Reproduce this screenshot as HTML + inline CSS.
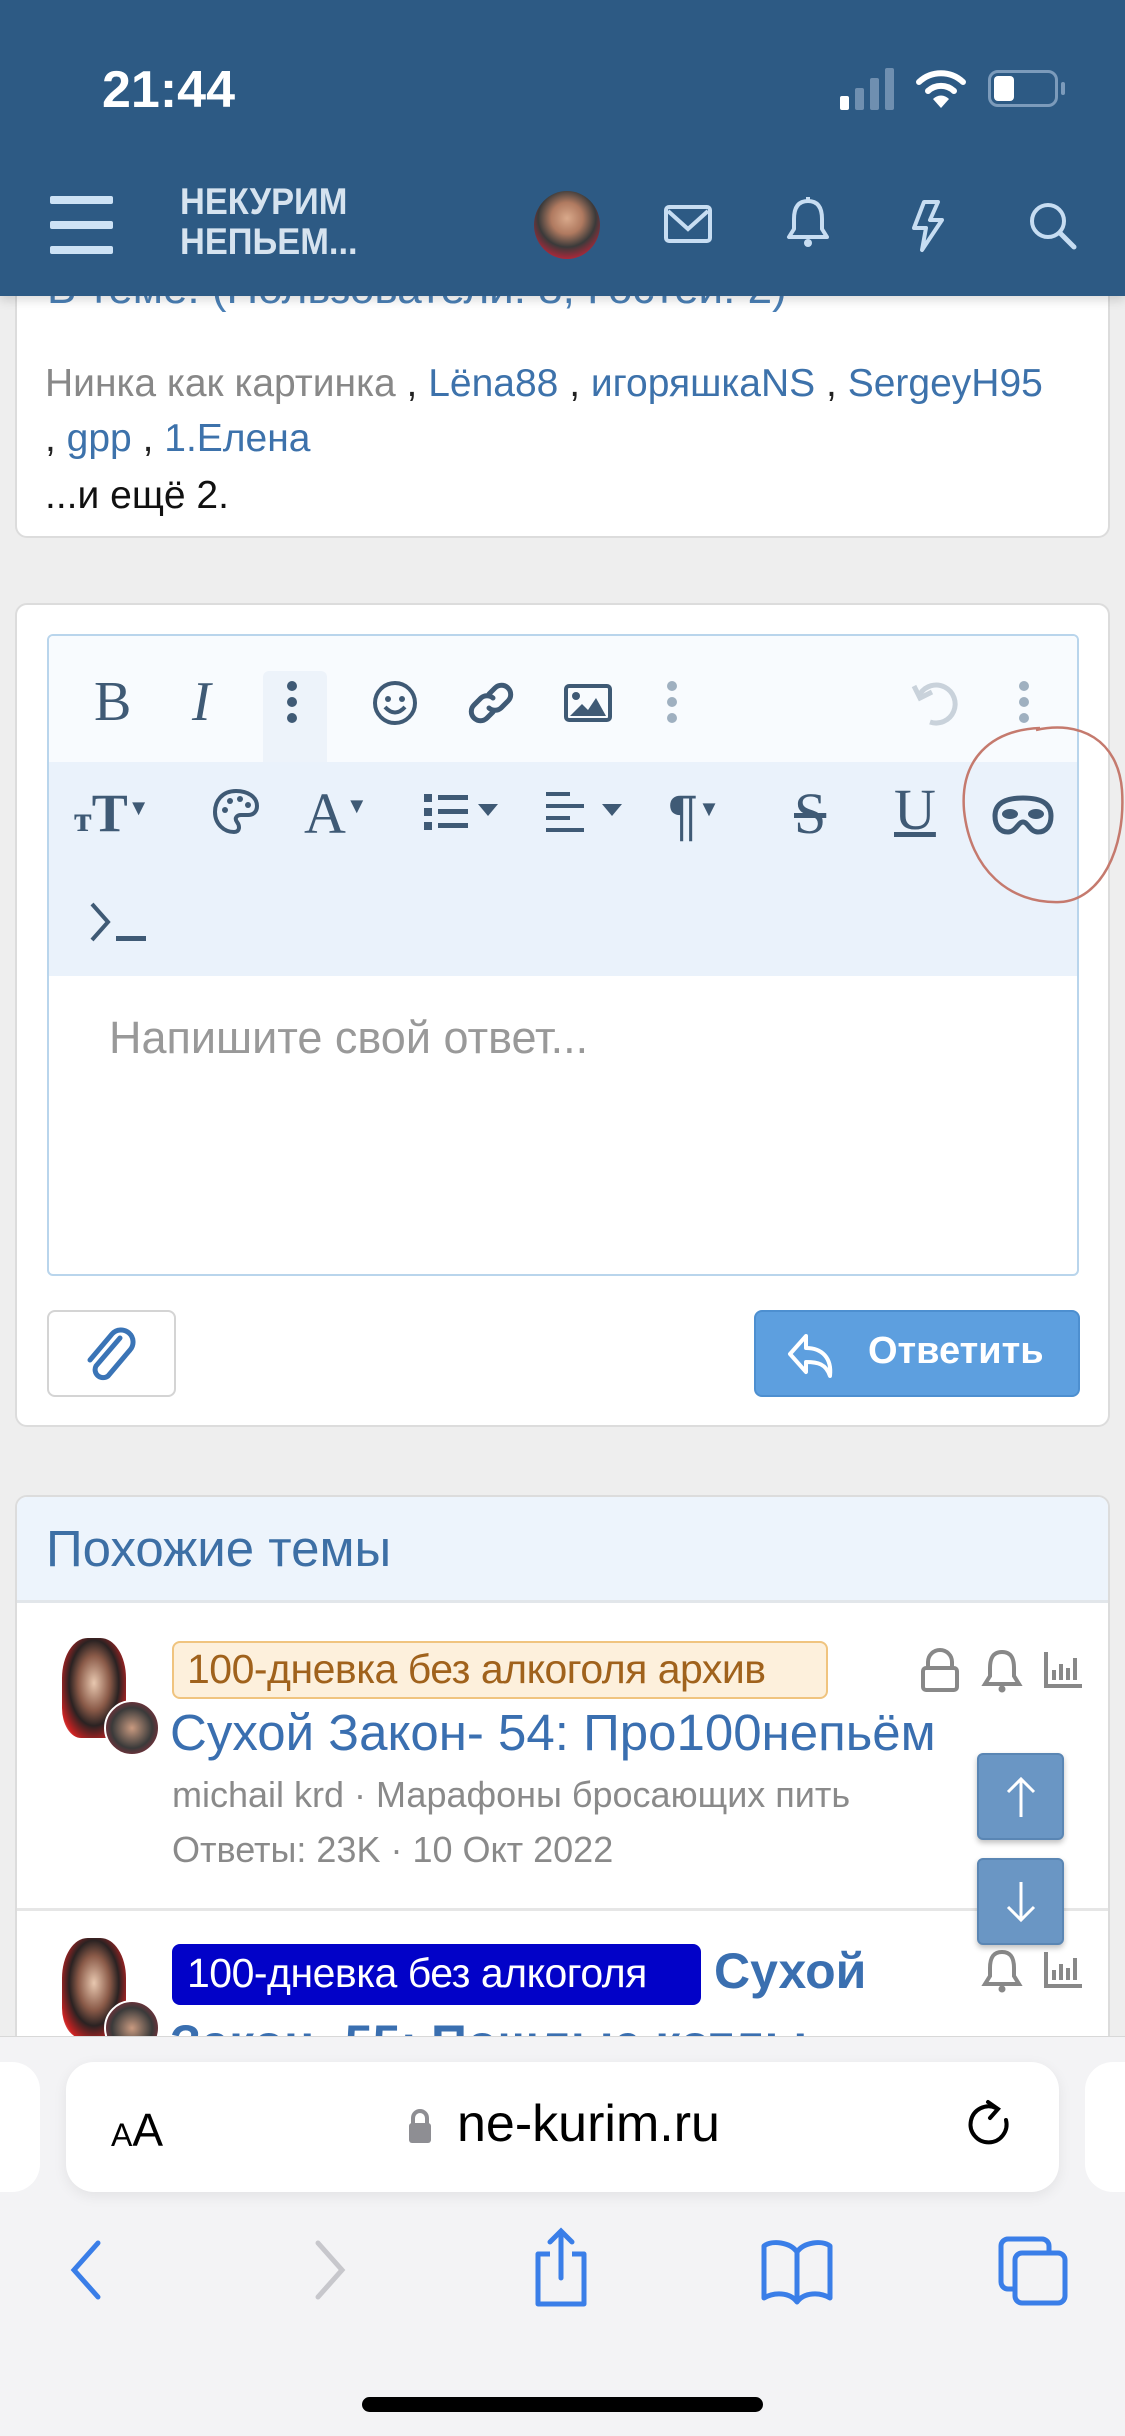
<!DOCTYPE html>
<html><head><meta charset="utf-8"><style>
*{margin:0;padding:0;box-sizing:border-box}
body{width:1125px;height:2436px;background:#eeeeee;position:relative;overflow:hidden;font-family:"Liberation Sans","DejaVu Sans",sans-serif}
.abs{position:absolute}
.card{position:absolute;left:15px;width:1095px;background:#fff;border:2px solid #dcdcdc;border-radius:12px}
.t{position:absolute;white-space:nowrap}
svg{position:absolute;overflow:visible}
</style></head><body>

<!-- card 1 -->
<div class="card" style="top:230px;height:308px"></div>
<div class="t" style="left:47px;top:264px;font-size:44px;color:#4a7fb5">В теме: (Пользователи: 8, Гостей: 2)</div>
<div class="t" style="left:45px;top:362px;font-size:39px;color:#888">Нинка как картинка <span style="color:#222">,</span> <span style="color:#3d72ab">Lëna88</span> <span style="color:#222">,</span> <span style="color:#3d72ab">игоряшкаNS</span> <span style="color:#222">,</span> <span style="color:#3d72ab">SergeyH95</span></div>
<div class="t" style="left:45px;top:417px;font-size:39px;color:#222">, <span style="color:#3d72ab">gpp</span> , <span style="color:#3d72ab">1.Елена</span></div>
<div class="t" style="left:45px;top:474px;font-size:39px;color:#111">...и ещё 2.</div>

<!-- header -->
<div class="abs" style="left:0;top:0;width:1125px;height:296px;background:#2d5a84;box-shadow:0 4px 10px rgba(0,0,0,.15)"></div>
<div class="t" style="left:102px;top:60px;font-size:52px;font-weight:bold;color:#fff">21:44</div>
<svg style="left:838px;top:68px" width="60" height="42"><rect x="2" y="28" width="9" height="14" rx="2" fill="#fff"/><rect x="17" y="20" width="9" height="22" rx="2" fill="#6f8fb0"/><rect x="32" y="10" width="9" height="32" rx="2" fill="#6f8fb0"/><rect x="47" y="0" width="9" height="42" rx="2" fill="#6f8fb0"/></svg>
<svg style="left:916px;top:68px" width="50" height="40" viewBox="0 0 50 40"><path d="M3 14 A32 32 0 0 1 47 14" stroke="#fff" stroke-width="6" fill="none" stroke-linecap="round"/><path d="M12 23 A19 19 0 0 1 38 23" stroke="#fff" stroke-width="6" fill="none" stroke-linecap="round"/><path d="M25 40 L17 31 A11 11 0 0 1 33 31 Z" fill="#fff"/></svg>
<div class="abs" style="left:988px;top:70px;width:70px;height:37px;border:3px solid #7c9bbb;border-radius:10px"></div>
<div class="abs" style="left:994px;top:76px;width:20px;height:25px;background:#fff;border-radius:4px"></div>
<div class="abs" style="left:1061px;top:82px;width:4px;height:13px;background:#7c9bbb;border-radius:2px"></div>

<div class="abs" style="left:50px;top:196px;width:63px;height:8px;background:#cde2f5;border-radius:2px"></div>
<div class="abs" style="left:50px;top:221px;width:63px;height:8px;background:#cde2f5;border-radius:2px"></div>
<div class="abs" style="left:50px;top:246px;width:63px;height:8px;background:#cde2f5;border-radius:2px"></div>
<div class="t" style="left:180px;top:182px;font-size:37px;font-weight:bold;color:#d6e3ef;line-height:40px;transform:scaleX(0.93);transform-origin:left">НЕКУРИМ<br>НЕПЬЕМ...</div>
<div class="abs" style="left:534px;top:191px;width:66px;height:68px;border-radius:50%;background:radial-gradient(circle at 50% 40%,#d9a98b 0,#b07a60 30%,#3a3a3a 55%,#b8263a 80%,#8a1a2a 100%)"></div>
<svg style="left:664px;top:205px" width="50" height="40"><rect x="2" y="2" width="44" height="34" rx="3" stroke="#c7ddf2" stroke-width="4" fill="none"/><path d="M4 6 L24 24 L44 6" stroke="#c7ddf2" stroke-width="4" fill="none"/></svg>
<svg style="left:786px;top:197px" width="44" height="52"><path d="M22 4 C10 4 8 14 8 22 L8 32 L3 40 L41 40 L36 32 L36 22 C36 14 34 4 22 4 Z" stroke="#c7ddf2" stroke-width="4" fill="none" stroke-linejoin="round"/><circle cx="22" cy="46" r="4" fill="#c7ddf2"/><rect x="20" y="0" width="4" height="6" fill="#c7ddf2"/></svg>
<svg style="left:908px;top:200px" width="40" height="52"><path d="M16 2 L30 2 L22 20 L34 20 L14 50 L18 28 L6 28 Z" stroke="#c7ddf2" stroke-width="4" fill="none" stroke-linejoin="round"/></svg>
<svg style="left:1028px;top:201px" width="50" height="50"><circle cx="20" cy="20" r="16" stroke="#c7ddf2" stroke-width="4" fill="none"/><path d="M32 32 L46 46" stroke="#c7ddf2" stroke-width="5" stroke-linecap="round"/></svg>

<!-- card 2 editor -->
<div class="card" style="top:603px;height:824px"></div>
<div class="abs" style="left:47px;top:634px;width:1032px;height:642px;border:2px solid #b9d5ec;border-radius:6px;overflow:hidden;background:#fff">
  <div class="abs" style="left:0;top:0;width:1032px;height:126px;background:#f8fbfe"></div>
  <div class="abs" style="left:214px;top:35px;width:64px;height:92px;background:#edf3fa;border-radius:6px 6px 0 0"></div>
  <div class="abs" style="left:0;top:126px;width:1032px;height:214px;background:#eaf2fb"></div>
</div>
<div class="t" style="left:94px;top:670px;font-size:56px;font-family:'Liberation Serif',serif;color:#3f5a75">B</div>
<div class="t" style="left:192px;top:670px;font-size:56px;font-family:'Liberation Serif',serif;font-style:italic;color:#3f5a75">I</div>
<svg style="left:286px;top:680px" width="12" height="46"><circle cx="6" cy="6" r="5" fill="#3f5a75"/><circle cx="6" cy="22" r="5" fill="#3f5a75"/><circle cx="6" cy="38" r="5" fill="#3f5a75"/></svg>
<svg style="left:372px;top:680px" width="46" height="46"><circle cx="23" cy="23" r="20" stroke="#3f5a75" stroke-width="4" fill="none"/><circle cx="16" cy="19" r="3" fill="#3f5a75"/><circle cx="30" cy="19" r="3" fill="#3f5a75"/><path d="M13 27 Q23 38 33 27" stroke="#3f5a75" stroke-width="4" fill="none"/></svg>
<svg style="left:467px;top:680px" width="48" height="46"><path d="M22 14 L28 8 A9 9 0 0 1 41 21 L34 28 A9 9 0 0 1 22 28" stroke="#3f5a75" stroke-width="5" fill="none" stroke-linecap="round"/><path d="M26 32 L20 38 A9 9 0 0 1 7 25 L14 18 A9 9 0 0 1 26 18" stroke="#3f5a75" stroke-width="5" fill="none" stroke-linecap="round"/></svg>
<svg style="left:564px;top:684px" width="48" height="38"><rect x="2" y="2" width="44" height="34" rx="3" stroke="#3f5a75" stroke-width="4" fill="none"/><circle cx="12" cy="12" r="4" fill="#3f5a75"/><path d="M6 32 L18 20 L24 26 L32 14 L42 32 Z" fill="#3f5a75"/></svg>
<svg style="left:666px;top:680px" width="12" height="46"><circle cx="6" cy="6" r="5" fill="#9fb0c0"/><circle cx="6" cy="22" r="5" fill="#9fb0c0"/><circle cx="6" cy="38" r="5" fill="#9fb0c0"/></svg>
<svg style="left:912px;top:680px" width="50" height="46"><path d="M8 14 A19 19 0 1 1 18 42" stroke="#c9d2db" stroke-width="5" fill="none"/><path d="M2 6 L8 18 L20 12" stroke="#c9d2db" stroke-width="5" fill="none"/></svg>
<svg style="left:1018px;top:680px" width="12" height="46"><circle cx="6" cy="6" r="5" fill="#9fb0c0"/><circle cx="6" cy="22" r="5" fill="#9fb0c0"/><circle cx="6" cy="38" r="5" fill="#9fb0c0"/></svg>

<div class="t" style="left:74px;top:782px;font-size:54px;font-family:'Liberation Serif',serif;font-weight:bold;color:#3f5a75"><span style="font-size:36px">т</span>T<span style="font-size:22px;vertical-align:16px">▼</span></div>
<svg style="left:212px;top:788px" width="48" height="48"><path d="M24 3 C10 3 3 13 3 24 C3 36 12 44 22 44 C28 44 28 38 25 34 C22 30 25 27 29 27 L36 27 C42 27 45 23 45 18 C45 9 36 3 24 3 Z" stroke="#3f5a75" stroke-width="4" fill="none"/><circle cx="13" cy="22" r="3" fill="#3f5a75"/><circle cx="18" cy="13" r="3" fill="#3f5a75"/><circle cx="28" cy="11" r="3" fill="#3f5a75"/><circle cx="36" cy="17" r="3" fill="#3f5a75"/></svg>
<div class="t" style="left:304px;top:780px;font-size:58px;font-family:'Liberation Serif',serif;color:#3f5a75">A<span style="font-size:22px;vertical-align:20px">▼</span></div>
<svg style="left:422px;top:792px" width="82" height="40"><rect x="2" y="2" width="8" height="8" fill="#3f5a75"/><rect x="2" y="16" width="8" height="8" fill="#3f5a75"/><rect x="2" y="30" width="8" height="8" fill="#3f5a75"/><rect x="16" y="3" width="30" height="5" fill="#3f5a75"/><rect x="16" y="17" width="30" height="5" fill="#3f5a75"/><rect x="16" y="31" width="30" height="5" fill="#3f5a75"/><path d="M56 12 L76 12 L66 24 Z" fill="#3f5a75"/></svg>
<svg style="left:546px;top:790px" width="80" height="44"><rect x="0" y="2" width="24" height="4" fill="#3f5a75"/><rect x="0" y="14" width="38" height="4" fill="#3f5a75"/><rect x="0" y="26" width="24" height="4" fill="#3f5a75"/><rect x="0" y="38" width="38" height="4" fill="#3f5a75"/><path d="M56 14 L76 14 L66 26 Z" fill="#3f5a75"/></svg>
<div class="t" style="left:668px;top:782px;font-size:56px;color:#3f5a75">¶<span style="font-size:22px;vertical-align:18px">▼</span></div>
<div class="t" style="left:794px;top:780px;font-size:58px;color:#3f5a75;text-decoration:line-through;font-family:'Liberation Serif',serif">S</div>
<div class="t" style="left:894px;top:776px;font-size:58px;color:#3f5a75;text-decoration:underline;font-family:'Liberation Serif',serif">U</div>
<svg style="left:992px;top:794px" width="62" height="42"><path d="M31 4 C12 4 3 10 3 22 C3 32 8 38 16 38 C24 38 26 28 31 28 C36 28 38 38 46 38 C54 38 59 32 59 22 C59 10 50 4 31 4 Z" stroke="#3f5a75" stroke-width="5" fill="none"/><ellipse cx="18" cy="20" rx="8" ry="5" fill="#3f5a75"/><ellipse cx="44" cy="20" rx="8" ry="5" fill="#3f5a75"/></svg>
<svg style="left:950px;top:690px" width="180" height="240"><path d="M86 40 C130 30 168 50 172 100 C176 160 150 210 110 212 C60 214 20 180 14 120 C10 70 40 40 90 38" stroke="#c57a6e" stroke-width="2.5" fill="none"/></svg>
<svg style="left:88px;top:900px" width="62" height="46"><path d="M4 4 L20 22 L4 40" stroke="#3f5a75" stroke-width="4" fill="none"/><rect x="28" y="36" width="30" height="5" fill="#3f5a75"/></svg>
<div class="t" style="left:109px;top:1012px;font-size:45px;color:#999">Напишите свой ответ...</div>

<div class="abs" style="left:47px;top:1310px;width:129px;height:87px;border:2px solid #d4d4d4;border-radius:8px;background:#fff"></div>
<svg style="left:82px;top:1328px" width="60" height="56"><path d="M38 10 L14 38 A8 8 0 0 0 26 48 L48 22 A12 12 0 0 0 30 6 L8 32" stroke="#3a74b6" stroke-width="5" fill="none" stroke-linecap="round"/></svg>
<div class="abs" style="left:754px;top:1310px;width:326px;height:87px;border-radius:8px;background:#5d9fdf;border:2px solid #4d8fd0"></div>
<svg style="left:786px;top:1332px" width="52" height="48"><path d="M20 4 L4 22 L20 40 L20 30 C32 30 40 32 44 44 C46 26 36 16 20 16 Z" stroke="#fff" stroke-width="4" fill="none" stroke-linejoin="round"/></svg>
<div class="t" style="left:868px;top:1330px;font-size:38px;font-weight:bold;color:#fff">Ответить</div>

<!-- card 3 -->
<div class="card" style="top:1495px;height:640px;overflow:hidden">
  <div class="abs" style="left:0;top:0;width:1095px;height:106px;background:#edf4fc;border-bottom:3px solid #e2e6ea"></div>
  <div class="abs" style="left:0;top:411px;width:1095px;height:3px;background:#e6e6e6"></div>
</div>
<div class="t" style="left:46px;top:1519px;font-size:51px;color:#3d6fa5">Похожие темы</div>

<div class="abs" style="left:62px;top:1638px;width:64px;height:100px;border-radius:40% 40% 30% 30%;background:radial-gradient(ellipse at 50% 45%,#e8c8b0 0,#8a5a48 35%,#2a2222 55%,#c22 80%,#fff 100%)"></div>
<div class="abs" style="left:104px;top:1700px;width:56px;height:56px;border-radius:50%;border:2px solid #fff;background:radial-gradient(circle,#c99a80 0,#3a3a3a 55%,#b8263a 100%)"></div>
<div class="abs" style="left:172px;top:1641px;width:656px;height:58px;background:#fdf0dc;border:2px solid #f0c47f;border-radius:8px"></div>
<div class="t" style="left:187px;top:1646px;font-size:41px;color:#a0621c;letter-spacing:-0.5px">100-дневка без алкоголя архив</div>
<div class="t" style="left:170px;top:1703px;font-size:51px;color:#3a6fb0">Сухой Закон- 54: Про100непьём</div>
<div class="t" style="left:172px;top:1774px;font-size:36px;color:#8a8a8a">michail krd · Марафоны бросающих пить</div>
<div class="t" style="left:172px;top:1829px;font-size:36px;color:#8a8a8a">Ответы: 23K · 10 Окт 2022</div>
<svg style="left:920px;top:1650px" width="40" height="40"><path d="M8 18 L8 12 A12 12 0 0 1 32 12 L32 18" stroke="#888" stroke-width="4" fill="none"/><rect x="3" y="18" width="34" height="22" rx="3" stroke="#888" stroke-width="4" fill="none"/></svg>
<svg style="left:982px;top:1646px" width="40" height="46"><path d="M20 6 C10 6 8 14 8 22 L8 30 L3 38 L37 38 L32 30 L32 22 C32 14 30 6 20 6 Z" stroke="#888" stroke-width="4" fill="none"/><circle cx="20" cy="43" r="3.5" fill="#888"/></svg>
<svg style="left:1044px;top:1650px" width="40" height="38"><path d="M2 2 L2 36 L38 36" stroke="#888" stroke-width="4" fill="none"/><path d="M10 30 L10 20 M17 30 L17 14 M24 30 L24 18 M31 30 L31 8" stroke="#888" stroke-width="4"/></svg>

<div class="abs" style="left:62px;top:1938px;width:64px;height:100px;border-radius:40% 40% 30% 30%;background:radial-gradient(ellipse at 50% 45%,#e8c8b0 0,#8a5a48 35%,#2a2222 55%,#c22 80%,#fff 100%)"></div>
<div class="abs" style="left:104px;top:2000px;width:56px;height:56px;border-radius:50%;border:2px solid #fff;background:radial-gradient(circle,#c99a80 0,#3a3a3a 55%,#b8263a 100%)"></div>
<div class="abs" style="left:172px;top:1944px;width:529px;height:61px;background:#0202c8;border-radius:8px"></div>
<div class="t" style="left:187px;top:1950px;font-size:41px;color:#fff;letter-spacing:-0.5px">100-дневка без алкоголя</div>
<div class="t" style="left:714px;top:1942px;font-size:50px;font-weight:bold;color:#3a6fb0">Сухой</div>
<div class="t" style="left:170px;top:2014px;font-size:50px;font-weight:bold;color:#3a6fb0">Закон- 55: Пошлые котлы</div>
<svg style="left:982px;top:1946px" width="40" height="46"><path d="M20 6 C10 6 8 14 8 22 L8 30 L3 38 L37 38 L32 30 L32 22 C32 14 30 6 20 6 Z" stroke="#888" stroke-width="4" fill="none"/><circle cx="20" cy="43" r="3.5" fill="#888"/></svg>
<svg style="left:1044px;top:1950px" width="40" height="38"><path d="M2 2 L2 36 L38 36" stroke="#888" stroke-width="4" fill="none"/><path d="M10 30 L10 20 M17 30 L17 14 M24 30 L24 18 M31 30 L31 8" stroke="#888" stroke-width="4"/></svg>

<div class="abs" style="left:977px;top:1753px;width:87px;height:87px;background:#6a96c4;border:2px solid #5a86b4;border-radius:6px;box-shadow:0 3px 6px rgba(0,0,0,.25)"></div>
<svg style="left:1004px;top:1775px" width="34" height="44"><path d="M17 42 L17 4 M4 17 L17 4 L30 17" stroke="#fff" stroke-width="3" fill="none"/></svg>
<div class="abs" style="left:977px;top:1858px;width:87px;height:87px;background:#6a96c4;border:2px solid #5a86b4;border-radius:6px;box-shadow:0 3px 6px rgba(0,0,0,.25)"></div>
<svg style="left:1004px;top:1880px" width="34" height="44"><path d="M17 2 L17 40 M4 27 L17 40 L30 27" stroke="#fff" stroke-width="3" fill="none"/></svg>

<!-- safari bottom -->
<div class="abs" style="left:0;top:2036px;width:1125px;height:400px;background:#f3f3f5;border-top:1px solid #d8d8d8"></div>
<div class="abs" style="left:-40px;top:2062px;width:80px;height:130px;background:#fff;border-radius:28px"></div>
<div class="abs" style="left:1085px;top:2062px;width:80px;height:130px;background:#fff;border-radius:28px"></div>
<div class="abs" style="left:66px;top:2062px;width:993px;height:130px;background:#fff;border-radius:28px;box-shadow:0 4px 14px rgba(0,0,0,.07)"></div>
<div class="t" style="left:111px;top:2103px;font-size:46px;color:#000"><span style="font-size:32px">A</span>A</div>
<svg style="left:408px;top:2108px" width="24" height="36"><path d="M5 16 L5 10 A7 7 0 0 1 19 10 L19 16" stroke="#8e8e93" stroke-width="4" fill="none"/><rect x="1" y="15" width="22" height="20" rx="3" fill="#8e8e93"/></svg>
<div class="t" style="left:457px;top:2094px;font-size:52px;color:#000">ne-kurim.ru</div>
<svg style="left:968px;top:2100px" width="46" height="58"><path d="M28 8 A18 18 0 1 0 38 20" stroke="#000" stroke-width="4" fill="none" stroke-linecap="round"/><path d="M20 2 L30 9 L22 18" stroke="#000" stroke-width="4" fill="none" stroke-linecap="round"/></svg>

<svg style="left:68px;top:2240px" width="36" height="60"><path d="M30 3 L6 30 L30 57" stroke="#3a7ee8" stroke-width="5" fill="none" stroke-linecap="round"/></svg>
<svg style="left:312px;top:2240px" width="36" height="60"><path d="M6 3 L30 30 L6 57" stroke="#c7c7cc" stroke-width="5" fill="none" stroke-linecap="round"/></svg>
<svg style="left:532px;top:2228px" width="58" height="80"><path d="M18 26 L6 26 L6 76 L52 76 L52 26 L40 26" stroke="#3a7ee8" stroke-width="5" fill="none" stroke-linejoin="round"/><path d="M29 3 L29 50 M18 14 L29 3 L40 14" stroke="#3a7ee8" stroke-width="5" fill="none" stroke-linecap="round"/></svg>
<svg style="left:760px;top:2238px" width="74" height="66"><path d="M37 14 C30 4 12 2 4 8 L4 60 C14 54 30 54 37 64 C44 54 60 54 70 60 L70 8 C62 2 44 4 37 14 Z M37 14 L37 62" stroke="#3a7ee8" stroke-width="5" fill="none" stroke-linejoin="round"/></svg>
<svg style="left:998px;top:2236px" width="72" height="70"><rect x="3" y="3" width="48" height="50" rx="7" stroke="#3a7ee8" stroke-width="5" fill="none"/><rect x="17" y="17" width="50" height="50" rx="7" stroke="#3a7ee8" stroke-width="5" fill="#f3f3f5"/></svg>
<div class="abs" style="left:362px;top:2397px;width:401px;height:15px;background:#000;border-radius:8px"></div>
</body></html>
